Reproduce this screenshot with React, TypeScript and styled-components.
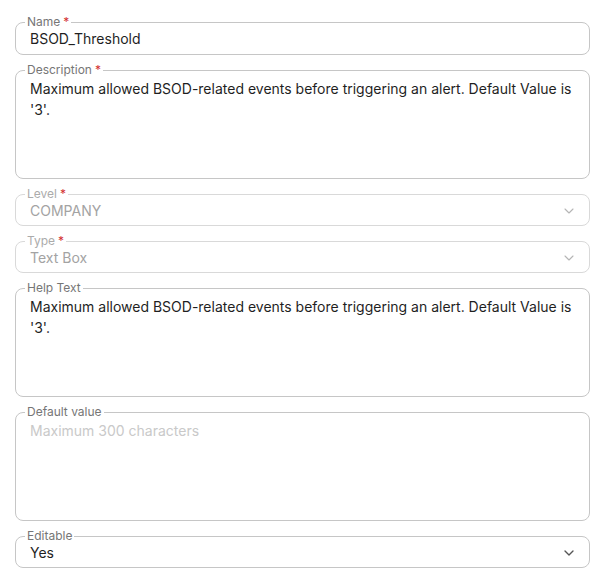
import styled, { createGlobalStyle } from "styled-components";
import { ChevronDown } from "lucide-react";

const GlobalStyle = createGlobalStyle`
    body {
        margin: 0;
        background: #ffffff;
        font-family: Inter, "Noto Sans", sans-serif;
    }
`

const Form = styled.div`
    width: 575px;
    margin-left: 15px;
    padding-top: 15px;
    display: flex;
    flex-direction: column;
    gap: 8px;
`

const Field = styled.fieldset<{ $disabled?: boolean }>`
    margin: 0;
    min-width: 0;
    padding: 0 14px;
    border: 1px solid ${(p) => (p.$disabled ? "#d9d9d9" : "#c6c6c6")};
    border-radius: 8px;
    background: #ffffff;
`

const Label = styled.legend<{ $disabled?: boolean }>`
    margin-left: -5px;
    padding: 0 2px;
    font-size: 12px;
    line-height: 14px;
    color: ${(p) => (p.$disabled ? "#ababab" : "#767676")};
`

const Star = styled.span`
    color: #d32f2f;
    margin-left: 3px;
`

const Row = styled.div<{ $input?: boolean }>`
    height: ${(p) => (p.$input ? "25px" : "24px")};
    display: flex;
    align-items: flex-start;
    justify-content: space-between;
`

const Value = styled.span<{ $muted?: boolean }>`
    font-size: 14px;
    line-height: 20px;
    color: ${(p) => (p.$muted ? "#a3a3a3" : "#1f1f1f")};
`

const Chevron = styled.span<{ $muted?: boolean }>`
    display: flex;
    margin-top: 2px;
    margin-right: -2px;
    color: ${(p) => (p.$muted ? "#b5b5b5" : "#555555")};
`

const Area = styled.textarea`
    display: block;
    box-sizing: border-box;
    width: 100%;
    height: 101px;
    margin: 0;
    padding: 1px 0 0;
    border: none;
    outline: none;
    resize: none;
    overflow: hidden;
    background: transparent;
    font-family: Inter, "Noto Sans", sans-serif;
    font-size: 14px;
    line-height: 21px;
    color: #1f1f1f;

    &::placeholder {
        color: #c9c9c9;
    }
`

const helpText =
    "Maximum allowed BSOD-related events before triggering an alert. Default Value is '3'."

const App = () => {
    return (
        <>
            <GlobalStyle />
            <Form>
                <Field>
                    <Label>Name<Star>*</Star></Label>
                    <Row $input>
                        <Value>BSOD_Threshold</Value>
                    </Row>
                </Field>

                <Field>
                    <Label>Description<Star>*</Star></Label>
                    <Area readOnly value={helpText} />
                </Field>

                <Field $disabled>
                    <Label $disabled>Level<Star>*</Star></Label>
                    <Row>
                        <Value $muted>COMPANY</Value>
                        <Chevron $muted><ChevronDown size={16} strokeWidth={1.6} /></Chevron>
                    </Row>
                </Field>

                <Field $disabled>
                    <Label $disabled>Type<Star>*</Star></Label>
                    <Row>
                        <Value $muted>Text Box</Value>
                        <Chevron $muted><ChevronDown size={16} strokeWidth={1.6} /></Chevron>
                    </Row>
                </Field>

                <Field>
                    <Label>Help Text</Label>
                    <Area readOnly value={helpText} />
                </Field>

                <Field>
                    <Label>Default value</Label>
                    <Area readOnly placeholder="Maximum 300 characters" />
                </Field>

                <Field>
                    <Label>Editable</Label>
                    <Row>
                        <Value>Yes</Value>
                        <Chevron><ChevronDown size={16} strokeWidth={2} /></Chevron>
                    </Row>
                </Field>
            </Form>
        </>
    );
};

export default App;
